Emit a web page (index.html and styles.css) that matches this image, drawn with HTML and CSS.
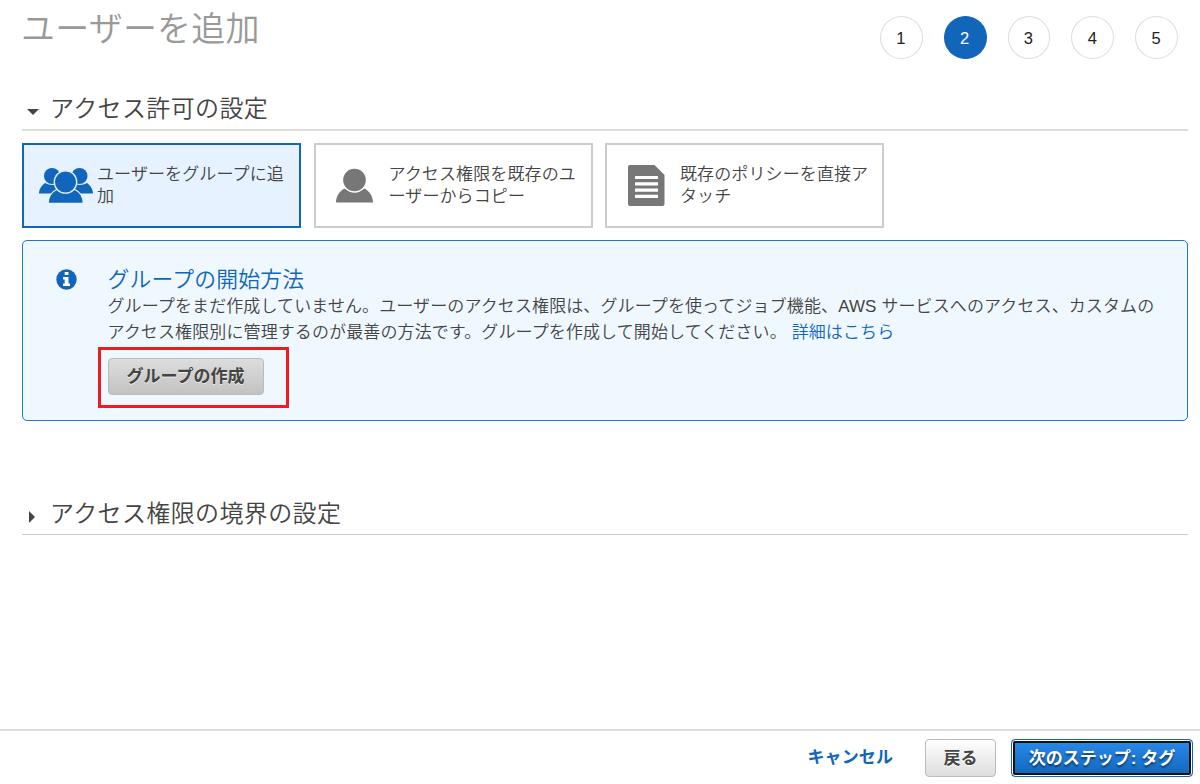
FILE: index.html
```html
<!DOCTYPE html>
<html lang="ja">
<head>
  <meta charset="UTF-8" />
  <meta name="viewport" content="width=device-width, initial-scale=1.0" />
  <title>ユーザーを追加</title>
  <link rel="stylesheet" href="styles.css">
</head>
<body>
  <main class="content">
    <header class="page-header">
      <h1>ユーザーを追加</h1>
      <ol class="steps">
        <li>1</li>
        <li class="active">2</li>
        <li>3</li>
        <li>4</li>
        <li>5</li>
      </ol>
    </header>

    <h2 class="section-title">
      <svg class="caret" width="12" height="12" viewBox="0 0 12 12"><path d="M0 3h12L6 9z" /></svg>
      <span>アクセス許可の設定</span>
    </h2>

    <div class="options">
      <div class="option selected">
        <svg class="option-icon" width="54" height="36" viewBox="0 0 54 36">
          <circle cx="13" cy="8" r="8" />
          <circle cx="40.500" cy="8" r="8" />
          <path d="M0 25.500c0-4 2.500-8 6-10.500q7.500 4 14 0v10.500zM54 25.500c0-4-2.500-8-6-10.500q-7.500 4-14 0v10.500z" />
          <g class="front">
            <path d="M9.200 35.300c0-6.500 3.500-11.500 8.500-13.800h18.100c5 2.300 8.500 7.300 8.500 13.800z" />
            <circle cx="26.500" cy="14" r="11.200" />
          </g>
        </svg>
        <span>ユーザーをグループに追加</span>
      </div>
      <div class="option">
        <svg class="option-icon" width="50" height="36" viewBox="0 0 50 36">
          <path d="M5 34.500c0-6 3.500-11.500 8.500-14q10 7 20 0c5 2.500 8.500 8 8.500 14z" />
          <circle class="front" cx="23.500" cy="12" r="12" />
        </svg>
        <span>アクセス権限を既存のユーザーからコピー</span>
      </div>
      <div class="option">
        <svg class="option-icon" width="50" height="42" viewBox="0 0 50 42">
          <path d="M8 0h24.500L42.500 10V39a2 2 0 0 1-2 2H8a2 2 0 0 1-2-2V2a2 2 0 0 1 2-2z" />
          <path class="lines" d="M13 12.500h23M13 18.800h23M13 25.100h23M13 31.400h23" />
        </svg>
        <span>既存のポリシーを直接アタッチ</span>
      </div>
    </div>

    <section class="info">
      <svg class="info-icon" width="21" height="21" viewBox="0 0 21 21">
        <circle cx="10.500" cy="10.500" r="10.200" />
        <path d="M8.700 3h3.800v3H8.700zM7 8h5.500v6.500H14V17H7v-2.500h1.700v-4H7z" />
      </svg>
      <div class="info-body">
        <h3>グループの開始方法</h3>
        <p>グループをまだ作成していません。ユーザーのアクセス権限は、グループを使ってジョブ機能、AWS サービスへのアクセス、カスタムの<br>アクセス権限別に管理するのが最善の方法です。グループを作成して開始してください。 <a href="#">詳細はこちら</a></p>
        <div class="create">
          <button class="btn btn-create">グループの作成</button>
          <div class="highlight"></div>
        </div>
      </div>
    </section>

    <h2 class="section-title collapsed">
      <svg class="caret" width="12" height="12" viewBox="0 0 12 12"><path d="M2 0v12l6-6z" /></svg>
      <span>アクセス権限の境界の設定</span>
    </h2>
  </main>

  <footer class="footer">
    <a class="cancel" href="#">キャンセル</a>
    <button class="btn btn-back">戻る</button>
    <button class="btn btn-next">次のステップ: タグ</button>
  </footer>
</body>
</html>
```

FILE: styles.css
```css
* {
  box-sizing: border-box;
}
body {
  margin: 0;
  height: 784px;
  display: flex;
  flex-direction: column;
  overflow: hidden;
  background: #fff;
  color: #444;
  font-family: "Liberation Sans", "Noto Sans CJK JP", sans-serif;
  font-size: 17px;
  font-weight: 350;
  letter-spacing: 0.11px;
}
h1, h2, h3, p, ol {
  margin: 0;
  padding: 0;
  font-weight: 350;
}
a {
  color: #1166bb;
  text-decoration: none;
}
.content {
  flex: 1;
  padding: 0 12px 0 22px;
}
.page-header {
  display: flex;
  justify-content: space-between;
  height: 88px;
}
h1 {
  margin: 5px 0 0 -1px;
  color: #999;
  font-size: 34px;
  line-height: 48px;
  letter-spacing: 0.2px;
}
.steps {
  display: flex;
  gap: 21px;
  margin: 16px 10px 0 0;
  list-style: none;
}
.steps li {
  width: 42.8px;
  height: 43px;
  padding-right: 1px;
  border: 1px solid #ddd;
  border-radius: 50%;
  color: #222;
  font-size: 16.5px;
  font-weight: 400;
  line-height: 43px;
  text-align: center;
}
.steps .active {
  border-color: #1166bb;
  background: #1166bb;
  color: #fff;
}
.section-title {
  display: flex;
  align-items: center;
  height: 43px;
  padding-left: 5px;
  border-bottom: 2px solid #ddd;
  font-size: 24px;
  line-height: 41px;
  letter-spacing: 0.38px;
}
.caret {
  margin: 6px 11px 0 0;
  fill: #444;
}
.options {
  display: flex;
  gap: 12.5px;
  margin-top: 12px;
}
.option {
  display: flex;
  align-items: center;
  width: 279px;
  height: 85px;
  padding: 0 10px 0 15px;
  border: 2px solid #ccc;
  line-height: 22px;
}
.option-icon {
  flex: none;
  margin-right: 8px;
  fill: #777;
}
.option .front {
  stroke: #fff;
  stroke-width: 1.3px;
}
.option .lines {
  stroke: #fff;
  stroke-width: 3.2px;
}
.selected {
  border-color: #1166bb;
  background: #e6f2ff;
}
.selected .option-icon {
  margin-right: 4px;
  fill: #1166bb;
}
.selected .front {
  stroke: #e6f2ff;
}
.info {
  display: flex;
  height: 181px;
  margin-top: 12px;
  padding: 25px 0 0 33px;
  border: 1.5px solid #2277cc;
  border-radius: 5px;
  background: #f0f8ff;
}
.info-icon {
  flex: none;
  margin: 3px 30.5px 0 0;
  fill: #1166bb;
}
.info-icon path {
  fill: #fff;
}
.info-body {
  white-space: nowrap;
}
.info h3 {
  color: #1166bb;
  font-size: 21.8px;
  line-height: 28px;
  letter-spacing: 0.2px;
}
.info p {
  line-height: 25.5px;
}
.btn {
  padding: 0 0 4px;
  border: 1px solid #bbb;
  border-radius: 4px;
  background: linear-gradient(#fff, #ddd);
  color: #444;
  font-family: inherit;
  font-size: 17px;
  font-weight: 700;
  text-shadow: 0 1px 0 #fff;
}
.create {
  position: relative;
  width: 156px;
  margin-top: 13px;
}
.btn-create {
  display: block;
  width: 156px;
  height: 37px;
  background: linear-gradient(#ddd, #c2c2c2);
  text-shadow: 0 1px 0 #eee;
}
/* red frame around the create button */
.highlight {
  position: absolute;
  top: -11px;
  left: -9.5px;
  width: 191px;
  height: 61px;
  border: 3px solid #ed1c24;
}
.collapsed {
  height: 42px;
  margin-top: 72px;
  border-bottom: 1px solid #ccc;
}
.footer {
  display: flex;
  justify-content: flex-end;
  align-items: flex-start;
  height: 55px;
  padding: 8px 7px 0 0;
  border-top: 2px solid #ddd;
}
.cancel {
  margin-right: 32px;
  font-weight: 700;
  line-height: 37px;
}
.btn-back {
  width: 71px;
  height: 38px;
  margin-right: 15px;
}
.btn-next {
  width: 182px;
  height: 38px;
  border: 1px solid #1166bb;
  background: linear-gradient(#2a8aea, #1166bb);
  box-shadow: inset 0 0 0 1px #fff, inset 0 0 0 3px #111;
  color: #fff;
  text-shadow: 0 2px 2px rgba(0, 0, 0, 0.5);
}
```
